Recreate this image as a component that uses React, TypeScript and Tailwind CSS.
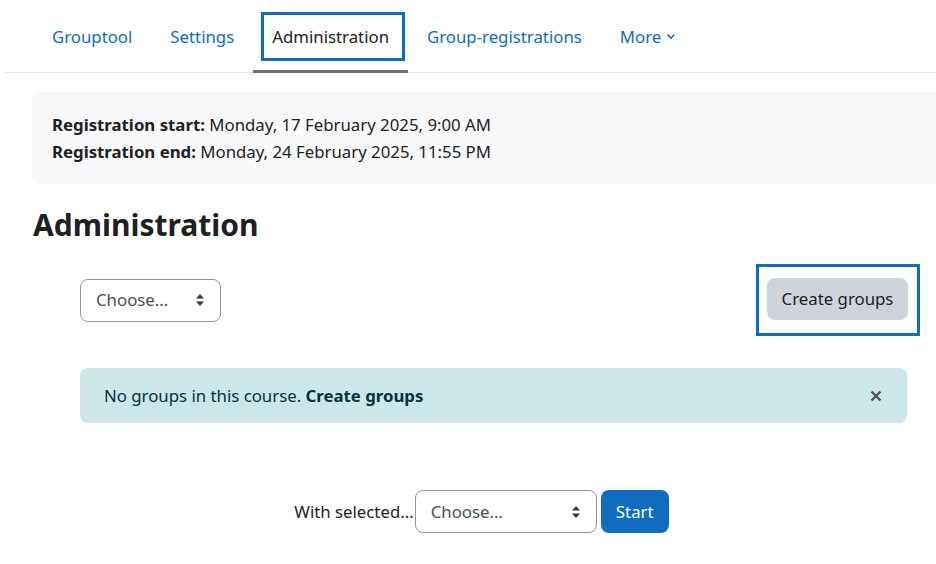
import React from "react";

const font = { fontFamily: '"Noto Sans", "Segoe UI", sans-serif' };

function Arrows() {
  return (
    <svg width="10" height="14" viewBox="0 0 10 14" className="shrink-0">
      <path d="M5 1 L9 5.5 H1 Z" fill="#343a40" />
      <path d="M5 13 L9 8.5 H1 Z" fill="#343a40" />
    </svg>
  );
}

function Select({ w, cls }: { w: string; cls: string }) {
  return (
    <div className={`${w} ${cls} flex items-center justify-between border border-[#8f959e] rounded-lg pl-[15px] pr-[15px] bg-white`}>
      <span className="text-[16.8px] text-[#495057]">Choose...</span>
      <Arrows />
    </div>
  );
}

export default function App() {
  const tabs = ["Grouptool", "Settings", "Administration", "Group-registrations"];
  return (
    <div className="w-[936px] h-[564px] overflow-hidden bg-white text-[#1d2125]" style={font}>
      <div className="ml-[5px] border-b border-[#dee2e6] h-[73px] flex pl-[28px]">
        {tabs.map((t) => (
          <div key={t} className={`relative px-[19px] flex items-center h-[73px] text-[16.8px] ${t === "Administration" ? "text-[#1d2125]" : "text-[#0f6cbf]"}`}>
            <span>{t}</span>
            {t === "Administration" && (
              <>
                <div className="absolute left-[8px] right-[3px] top-[12px] bottom-[12px] border-[3px] border-[#0f6cbf]" />
                <div className="absolute left-0 right-0 bottom-0 h-[3px] bg-[#6a737b]" />
              </>
            )}
          </div>
        ))}
        <div className="px-[19px] flex items-center h-[73px] text-[16.8px] text-[#0f6cbf] gap-[5px]">
          <span>More</span>
          <svg width="10" height="7" viewBox="0 0 10 7">
            <path d="M1.5 1.5 L5 5 L8.5 1.5" fill="none" stroke="#0f6cbf" strokeWidth="1.6" />
          </svg>
        </div>
      </div>

      <div className="pl-[32px] pt-[19px]">
        <div className="w-[930px] h-[92px] bg-[#f8f9fa] rounded-lg pl-[20px] pt-[19px] text-[16.8px] leading-[27px]">
          <div><b>Registration start:</b> Monday, 17 February 2025, 9:00 AM</div>
          <div><b>Registration end:</b> Monday, 24 February 2025, 11:55 PM</div>
        </div>

        <h2 className="mt-[20px] text-[30px] font-bold leading-[42px] pl-[1px]">Administration</h2>

        <div className="mt-[18px] pl-[48px] pr-[16px] flex items-center justify-between h-[72px]">
          <Select w="w-[141px]" cls="h-[43px]" />
          <div className="border-[3px] border-[#0f6cbf] pl-[8px] pr-[9px] pt-[11px] pb-[13px]">
            <div className="h-[42px] w-[141px] bg-[#ced4da] rounded-lg flex items-center justify-center text-[16.8px]">Create groups</div>
          </div>
        </div>

        <div className="mt-[32px] ml-[48px] mr-[29px] h-[55px] bg-[#cce6ea] rounded-lg flex items-center justify-between pl-[24px] pr-[25px] text-[16.8px] text-[#00343c]">
          <span>No groups in this course. <b>Create groups</b></span>
          <svg width="12" height="12" viewBox="0 0 12 12">
            <path d="M1.5 1.5 L10.5 10.5 M10.5 1.5 L1.5 10.5" stroke="#4d5256" strokeWidth="2.4" />
          </svg>
        </div>

        <div className="mt-[67px] flex items-center justify-center pr-[5px]">
          <span className="text-[16.8px] mr-[1px]">With selected...</span>
          <Select w="w-[182px]" cls="h-[43px]" />
          <div className="ml-[4px] h-[43px] w-[68px] bg-[#0f6cbf] text-white rounded-lg flex items-center justify-center text-[16.8px]">Start</div>
        </div>
      </div>
    </div>
  );
}
